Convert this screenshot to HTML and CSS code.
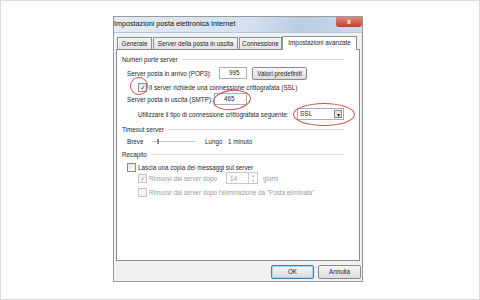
FILE: index.html
```html
<!DOCTYPE html>
<html lang="it">
<head>
    <meta charset="UTF-8">
    <title>Impostazioni posta elettronica Internet</title>
    <link rel="stylesheet" href="styles.css">
</head>
<body>
    <div class="frame">
        <div class="dialog">
            <div class="titlebar">
                <span class="title">Impostazioni posta elettronica Internet</span>
                <span class="close">x</span>
            </div>
            <div class="tabs">
                <div class="tab t1">Generale</div>
                <div class="tab t2">Server della posta in uscita</div>
                <div class="tab t3">Connessione</div>
                <div class="tab active">Impostazioni avanzate</div>
            </div>
            <div class="panel">
                <div class="gtitle">Numeri porte server<span class="rule"></span></div>

                <div class="row r12 ind1 mt3">
                    <span class="label w92">Server posta in arrivo (POP3):</span>
                    <span class="input w26">995</span>
                    <span class="button btn-def">Valori predefiniti</span>
                </div>
                <div class="row r10 ind2 mt3">
                    <span class="check checked">✓</span>
                    <span>Il server richiede una connessione crittografata (SSL)</span>
                </div>
                <div class="row r12 ind1 mt1">
                    <span class="label w87">Server posta in uscita (SMTP):</span>
                    <span class="input w31">465</span>
                </div>
                <div class="row r12 ind2 mt3">
                    <span class="label w159">Utilizzare il tipo di connessione crittografata seguente:</span>
                    <span class="select">SSL<span class="arrow">▾</span></span>
                </div>

                <div class="gtitle mt4">Timeout server<span class="rule"></span></div>
                <div class="row r10 ind1 mt2">
                    <span class="label w25">Breve</span>
                    <span class="slider"><span class="thumb"></span></span>
                    <span class="label w23">Lungo</span>
                    <span>1 minuto</span>
                </div>

                <div class="gtitle mt3">Recapito<span class="rule"></span></div>
                <div class="row r10 ind1 mt3">
                    <span class="check"></span>
                    <span>Lascia una copia dei messaggi sul server</span>
                </div>
                <div class="row r12 ind2 off">
                    <span class="check checked">✓</span>
                    <span class="label w77">Rimuovi dal server dopo</span>
                    <span class="spin">14<span class="updown"><span>▴</span><span>▾</span></span></span>
                    <span class="days">giorni</span>
                </div>
                <div class="row r10 ind2 mt3 off">
                    <span class="check"></span>
                    <span>Rimuovi dal server dopo l'eliminazione da "Posta eliminata"</span>
                </div>

                <span class="ring ring1"></span>
                <span class="ring ring2"></span>
                <span class="ring ring3"></span>
            </div>
            <div class="actions">
                <span class="button ok">OK</span>
                <span class="button">Annulla</span>
            </div>
        </div>
    </div>
</body>
</html>
```

FILE: styles.css
```css
body {
    margin: 0;
    background: #fff;
    font-family: "Liberation Sans", Arial, sans-serif;
}
.frame {
    width: 478px;
    height: 298px;
    border: 1px solid #dcdcdc;
    background: #fff;
    overflow: hidden;
}
.dialog {
    width: 248px;
    margin: 15px 0 0 112px;
    border: 1px solid #9a9a9a;
    background: #f0f0f0;
    font-size: 6.3px;
    color: #262626;
}
.titlebar {
    height: 15px;
    display: flex;
    justify-content: space-between;
    background: linear-gradient(100deg, #e4ecf6 0%, #d3e0ef 55%, #b9cde4 75%, #cddbeb 100%);
    border-bottom: 1px solid #b8c8dc;
}
.title {
    font-size: 7.2px;
    line-height: 14px;
    color: #111;
}
.close {
    width: 26px;
    height: 10px;
    background: linear-gradient(#e08a7c, #c53d2c);
    border-radius: 0 0 3px 3px;
    color: #fff;
    font-size: 7px;
    font-weight: bold;
    line-height: 9px;
    text-align: center;
}
.tabs {
    display: flex;
    align-items: flex-end;
    height: 16px;
    padding-left: 3px;
}
.tab {
    height: 11px;
    line-height: 11px;
    padding: 0 2px;
    border: 1px solid #8e8f8f;
    border-bottom: none;
    background: linear-gradient(#f5f5f5, #e3e3e3);
    margin-right: 1px;
    text-align: center;
    white-space: nowrap;
}
.t1 { width: 29px; }
.t2 { width: 79px; }
.t3 { width: 37px; }
.tab.active {
    width: 69px;
    height: 13px;
    line-height: 11px;
    background: #fff;
    margin: 0 0 -1px -1px;
    position: relative;
    z-index: 1;
}
.panel {
    position: relative;
    margin: 0 2px;
    height: 206px;
    border: 1px solid #898c95;
    background: #fff;
    padding-top: 4px;
    box-sizing: content-box;
}
.gtitle {
    display: flex;
    align-items: center;
    height: 10px;
    padding-left: 5px;
    margin-right: 15px;
    white-space: nowrap;
}
.rule {
    flex: 1;
    height: 1px;
    margin-left: 4px;
    background: #d5dfe5;
}
.row {
    display: flex;
    align-items: center;
    white-space: nowrap;
}
.r10 { height: 10px; }
.r12 { height: 12px; }
.ind1 { padding-left: 10px; }
.ind2 { padding-left: 21px; }
.mt1 { margin-top: 1px; }
.mt2 { margin-top: 2px; }
.mt3 { margin-top: 3px; }
.mt4 { margin-top: 4px; }
.label { flex: none; }
.w23 { width: 23px; }
.w25 { width: 25px; }
.w77 { width: 77px; }
.w87 { width: 87px; }
.w92 { width: 92px; }
.w159 { width: 159px; }
.input {
    height: 10px;
    line-height: 10px;
    border: 1px solid #abadb3;
    padding-left: 9px;
    box-sizing: content-box;
}
.w26 { width: 17px; }
.w31 { width: 22px; }
.button {
    height: 11px;
    line-height: 11px;
    border: 1px solid #8a8a8a;
    border-radius: 2px;
    background: linear-gradient(#f6f6f6, #dcdcdc);
    text-align: center;
}
.btn-def {
    width: 53px;
    margin-left: 5px;
}
.check {
    width: 7px;
    height: 7px;
    border: 1px solid #8f8f8f;
    background: linear-gradient(#e6e6e6, #fafafa);
    margin-right: 2px;
    color: #2a4fa8;
    font-size: 7px;
    line-height: 7px;
    text-align: center;
    flex: none;
}
.select {
    position: relative;
    width: 43px;
    height: 10px;
    line-height: 10px;
    padding-left: 2px;
    border: 1px solid #abadb3;
}
.arrow {
    position: absolute;
    right: 1px;
    top: 1px;
    width: 8px;
    height: 8px;
    line-height: 8px;
    border: 1px solid #8a8a8a;
    background: #e8e8e8;
    text-align: center;
    font-size: 6px;
    box-sizing: border-box;
}
.slider {
    position: relative;
    width: 44px;
    height: 1px;
    background: #c8c8c8;
    margin-right: 9px;
}
.thumb {
    position: absolute;
    left: 5px;
    top: -2px;
    width: 2px;
    height: 5px;
    background: #8a8a8a;
}
.off {
    color: #9a9a9a;
}
.off .check {
    border-color: #c4c4c4;
    color: #a8a8a8;
    background: #f4f4f4;
}
.spin {
    display: flex;
    align-items: center;
    justify-content: space-between;
    width: 27px;
    height: 10px;
    padding-left: 3px;
    border: 1px solid #c8c8c8;
}
.updown {
    display: flex;
    flex-direction: column;
    width: 8px;
    height: 10px;
    border-left: 1px solid #d0d0d0;
    font-size: 4px;
    line-height: 5px;
    text-align: center;
    color: #b0b0b0;
}
.days {
    margin-left: 5px;
}
.ring {
    position: absolute;
    border: 1px solid #c9514b;
    border-radius: 50%;
}
.ring1 {
    left: 13px;
    top: 27px;
    width: 16px;
    height: 16px;
}
.ring2 {
    left: 96px;
    top: 40px;
    width: 36px;
    height: 18px;
    transform: rotate(-6deg);
}
.ring3 {
    left: 176px;
    top: 53px;
    width: 60px;
    height: 21px;
}
.actions {
    display: flex;
    justify-content: flex-end;
    gap: 4px;
    padding: 4px 1px 2px;
}
.actions .button {
    width: 41px;
    height: 12px;
    line-height: 12px;
}
.ok {
    border-color: #3c7fb1;
    box-shadow: inset 0 0 0 1px #a7d5f2;
}
```
